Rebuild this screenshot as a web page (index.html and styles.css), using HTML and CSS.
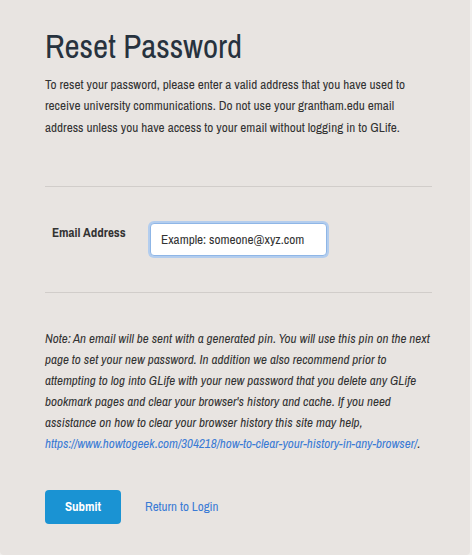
FILE: index.html
```html
<!DOCTYPE html>
<html>
<head>
<meta charset="utf-8">
<link rel="stylesheet" href="styles.css">
</head>
<body>
<div class="card">
  <h1 class="title">Reset Password</h1>
  <p class="intro">To reset your password, please enter a valid address that you have used to receive university communications. Do not use your grantham.edu email address unless you have access to your email without logging in to GLife.</p>
  <hr class="rule">
  <div class="field">
    <label class="label">Email Address</label>
    <div class="input">Example: someone@xyz.com</div>
  </div>
  <hr class="rule rule-bottom">
  <p class="note">Note: An email will be sent with a generated pin. You will use this pin on the next page to set your new password. In addition we also recommend prior to attempting to log into GLife with your new password that you delete any GLife bookmark pages and clear your browser's history and cache. If you need assistance on how to clear your browser history this site may help, <a class="link" href="#">https://www.howtogeek.com/304218/how-to-clear-your-history-in-any-browser/</a>.</p>
  <div class="actions">
    <button class="submit">Submit</button>
    <a class="return" href="#">Return to Login</a>
  </div>
</div>
</body>
</html>
```
FILE: styles.css
```css
html, body {
  margin: 0;
  padding: 0;
  background: #f1efed;
}
body {
  font-family: "Liberation Sans Narrow", "Archivo Narrow", "Liberation Sans", sans-serif;
  color: #333;
}
.card {
  width: 470px;
  height: 555px;
  box-sizing: border-box;
  background: #e8e4e1;
  border-radius: 0 0 4px 4px;
  padding: 28px 38px 0 45px;
}
.title {
  margin: 0;
  font-weight: 400;
  font-size: 33px;
  line-height: 36px;
  color: #27323e;
}
.intro {
  margin: 10px 0 0;
  font-size: 13.2px;
  line-height: 21.3px;
  color: #333;
}
.rule {
  border: 0;
  border-top: 1px solid #d1cdca;
  margin: 48px 0 0;
}
.rule-bottom {
  margin-top: 0;
}
.field {
  display: flex;
  align-items: flex-start;
  box-sizing: border-box;
  padding: 36px 0 0 7px;
  height: 105px;
}
.label {
  font-weight: 700;
  font-size: 13px;
  line-height: 16px;
  width: 98px;
  color: #333;
  padding-top: 2px;
}
.input {
  width: 177px;
  height: 33px;
  box-sizing: border-box;
  background: #fff;
  border: 1px solid #8fb6e6;
  box-shadow: 0 0 0 2px #b3cdee;
  border-radius: 4px;
  padding: 0 10px;
  font-size: 13.2px;
  line-height: 31px;
  color: #333;
}
.note {
  margin: 35px 0 0;
  font-style: italic;
  font-size: 13.1px;
  line-height: 21px;
  color: #333;
}
.link {
  color: #3a7bd5;
  text-decoration: none;
}
.actions {
  display: flex;
  align-items: center;
  margin-top: 36px;
  gap: 24px;
}
.submit {
  width: 76px;
  height: 34px;
  border: 0;
  border-radius: 4px;
  background: #1a93d3;
  color: #fff;
  font-family: inherit;
  font-weight: 700;
  font-size: 13px;
}
.return {
  color: #3a7bd5;
  text-decoration: none;
  font-size: 13px;
}
```
